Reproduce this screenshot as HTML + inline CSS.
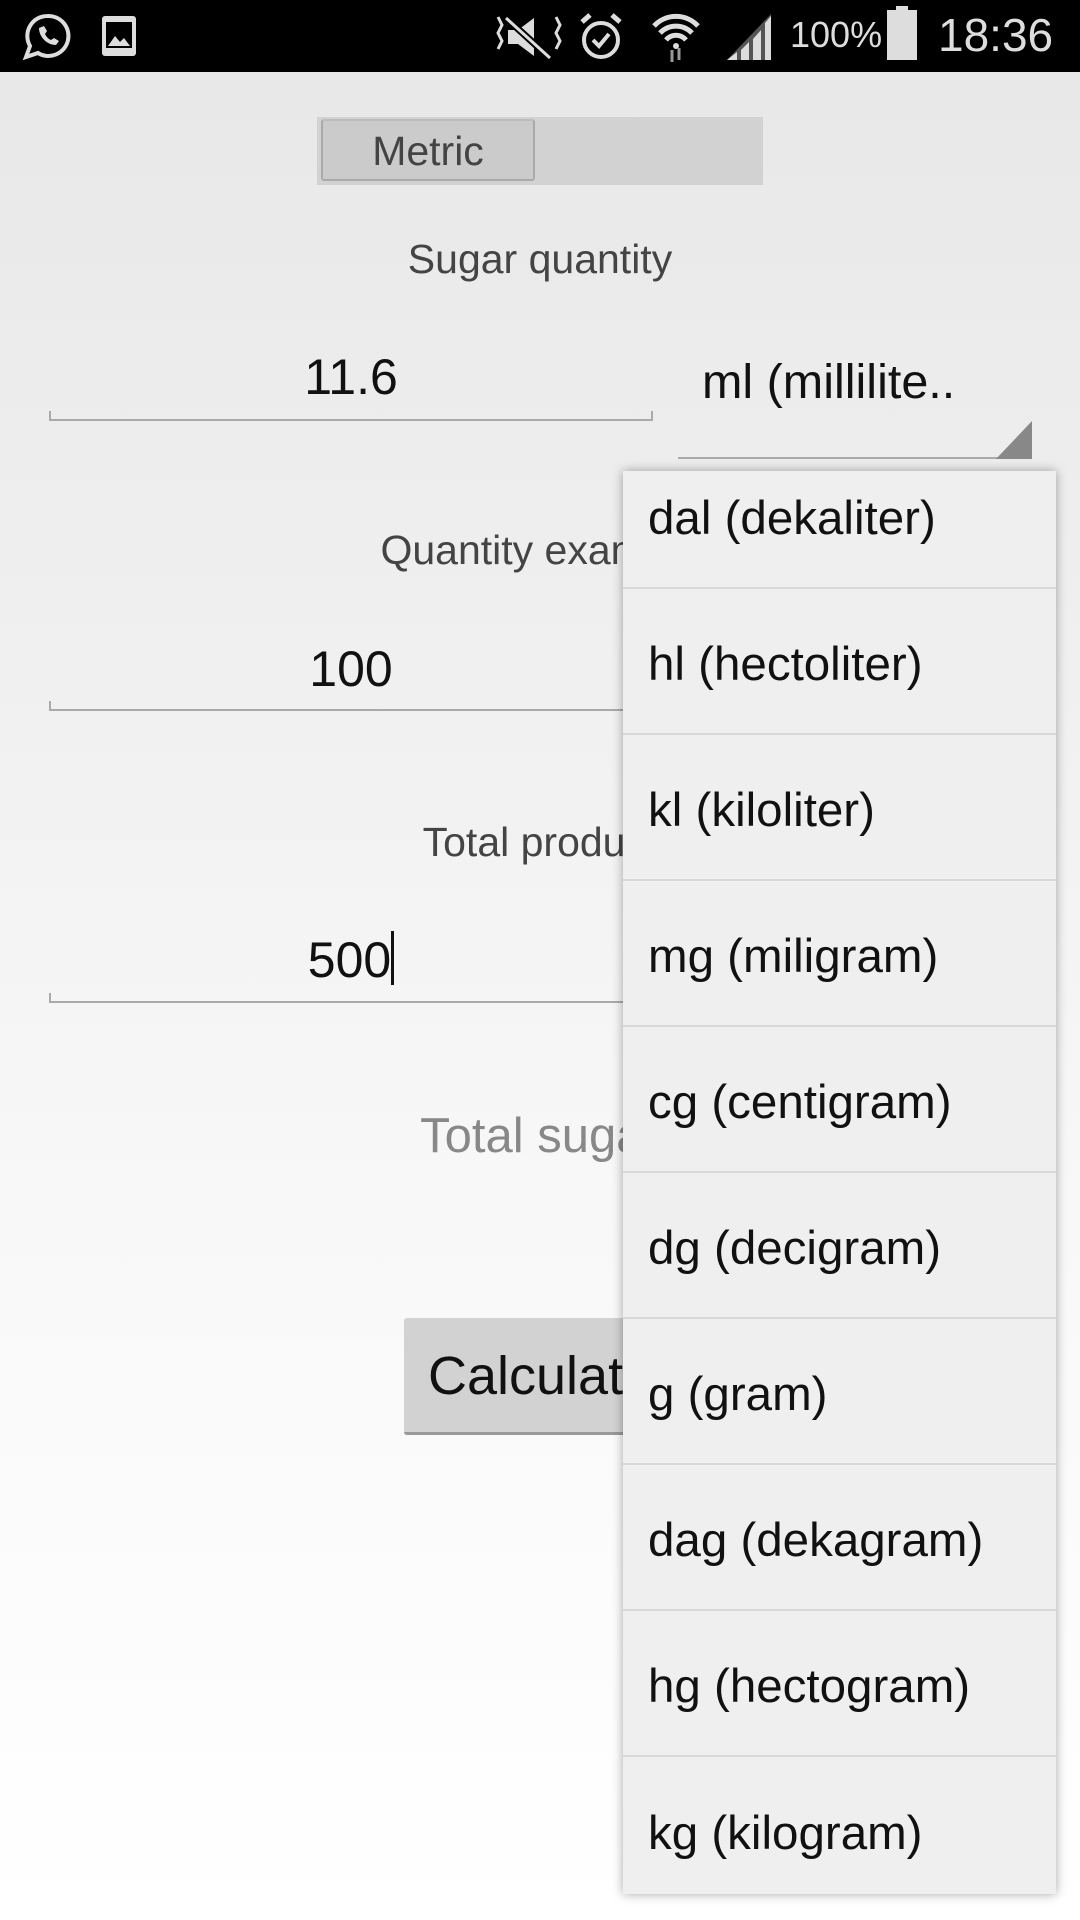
<!DOCTYPE html>
<html><head><meta charset="utf-8"><style>
*{margin:0;padding:0;box-sizing:border-box}
body{width:1080px;height:1920px;overflow:hidden;position:relative;font-family:"Liberation Sans",sans-serif;background:linear-gradient(#e8e8e8 72px,#efefef 600px,#f8f8f8 1200px,#fff 1920px)}
.abs{position:absolute}
.sb{left:0;top:0;width:1080px;height:72px;background:#000;color:#ddd}
.c{left:0;width:1080px;text-align:center}
.lbl{font-size:41px;color:#444}
.val{font-size:50px;color:#111}
.line{height:2px;background:#aaa}
.dd{left:623px;top:471px;width:433px;height:1423px;background:#efefef;box-shadow:0 0 10px rgba(0,0,0,.35);overflow:hidden}
.it{position:absolute;left:0;width:433px;height:146px;border-bottom:2px solid #d8d8d8;font-size:47.5px;color:#111;padding-left:25px;padding-top:6px;display:flex;align-items:center}
</style></head><body>
<div class="abs sb">
<svg class="abs" style="left:22px;top:12px" width="50" height="50" viewBox="0 0 50 50"><path d="M25 4a20 20 0 0 0-17 30l-4 11 12-4A20 20 0 1 0 25 4z" fill="none" stroke="#ddd" stroke-width="4"/><path d="M17 16c0 9 8 17 17 17l3-4-5-3-3 2c-3-1-5-4-6-6l2-3-3-5z" fill="#ddd"/></svg>
<svg class="abs" style="left:100px;top:14px" width="40" height="46"><rect x="2" y="2" width="34" height="40" rx="3" fill="#ddd"/><rect x="6" y="8" width="26" height="26" fill="#000"/><path d="M8 32l7-10 5 6 4-4 6 8z" fill="#ddd"/></svg>
<svg class="abs" style="left:494px;top:12px" width="70" height="50"><path d="M4 5l4 8-4 8 4 8-4 8M62 5l4 8-4 8 4 8-4 8" stroke="#ddd" fill="none" stroke-width="3"/><path d="M14 18h10l16-12v38L24 32H14z" fill="#ddd"/><path d="M12 6l44 40" stroke="#000" stroke-width="7"/><path d="M12 6l44 40" stroke="#ddd" stroke-width="3"/></svg>
<svg class="abs" style="left:578px;top:12px" width="46" height="50"><circle cx="23" cy="28" r="17" fill="none" stroke="#ddd" stroke-width="4"/><path d="M15 28l6 6 10-12" stroke="#ddd" stroke-width="4" fill="none"/><path d="M4 10l8-7M42 10l-8-7" stroke="#ddd" stroke-width="5"/></svg>
<svg class="abs" style="left:650px;top:8px" width="52" height="56"><path d="M4 18a30 30 0 0 1 44 0M10 25a22 22 0 0 1 32 0M16 32a13 13 0 0 1 20 0" stroke="#ddd" stroke-width="5" fill="none"/><circle cx="26" cy="38" r="3" fill="#ddd"/><path d="M22 42v12M29 40v12" stroke="#999" stroke-width="3"/></svg>
<svg class="abs" style="left:725px;top:12px" width="50" height="50"><path d="M2 48L46 2v46z" fill="#555"/><path d="M2 48h10v-8z M16 48h8V30l-8 8z M28 48h8V18l-8 9z M40 48h6V4l-6 7z" fill="#ddd"/></svg>
<div class="abs" style="left:790px;top:14px;font-size:36px;color:#ddd">100%</div>
<div class="abs" style="left:887px;top:10px;width:30px;height:50px;background:#ddd"></div>
<div class="abs" style="left:896px;top:6px;width:12px;height:6px;background:#ddd"></div>
<div class="abs" style="left:938px;top:8px;font-size:46px;color:#ddd">18:36</div>
</div>
<div class="abs" style="left:317px;top:117px;width:446px;height:68px;background:#d2d2d2"></div>
<div class="abs" style="left:321px;top:119px;width:214px;height:62px;background:#cbcbcb;border:2px solid #aaa;border-top-color:#bbb;border-radius:3px;font-size:41px;color:#444;text-align:center;line-height:60px">Metric</div>
<div class="abs c lbl" style="top:236px">Sugar quantity</div>
<div class="abs val" style="left:49px;width:604px;text-align:center;top:348px">11.6</div>
<div class="abs line" style="left:49px;width:604px;top:419px"></div>
<div class="abs" style="left:49px;width:2px;height:10px;top:411px;background:#aaa"></div>
<div class="abs" style="left:651px;width:2px;height:10px;top:411px;background:#aaa"></div>
<div class="abs" style="left:702px;top:354px;font-size:48.5px;color:#111">ml (millilite..</div>
<div class="abs line" style="left:678px;width:353px;top:457px"></div>
<svg class="abs" style="left:996px;top:421px" width="36" height="38"><path d="M36 0v38H0z" fill="#888"/></svg>
<div class="abs c lbl" style="top:527px">Quantity example</div>
<div class="abs val" style="left:49px;width:604px;text-align:center;top:640px">100</div>
<div class="abs line" style="left:49px;width:604px;top:709px"></div>
<div class="abs" style="left:49px;width:2px;height:10px;top:701px;background:#aaa"></div>
<div class="abs c lbl" style="top:819px">Total product</div>
<div class="abs val" style="left:49px;width:604px;text-align:center;top:931px">500<span style="display:inline-block;width:3px;height:54px;background:#111;vertical-align:-8px"></span></div>
<div class="abs line" style="left:49px;width:604px;top:1001px"></div>
<div class="abs" style="left:49px;width:2px;height:10px;top:993px;background:#aaa"></div>
<div class="abs c" style="top:1108px;font-size:49px;color:#888">Total sugar</div>
<div class="abs" style="left:404px;top:1318px;width:400px;height:117px;background:#d2d2d2;border-bottom:3px solid #999;border-radius:3px;font-size:54px;color:#111;padding-left:24px;line-height:116px">Calculate</div>
<div class="abs dd">
<div class="it" style="top:-28px">dal (dekaliter)</div>
<div class="it" style="top:118px">hl (hectoliter)</div>
<div class="it" style="top:264px">kl (kiloliter)</div>
<div class="it" style="top:410px">mg (miligram)</div>
<div class="it" style="top:556px">cg (centigram)</div>
<div class="it" style="top:702px">dg (decigram)</div>
<div class="it" style="top:848px">g (gram)</div>
<div class="it" style="top:994px">dag (dekagram)</div>
<div class="it" style="top:1140px">hg (hectogram)</div>
<div class="it" style="top:1286px;border:none">kg (kilogram)</div>
</div>
</body></html>
